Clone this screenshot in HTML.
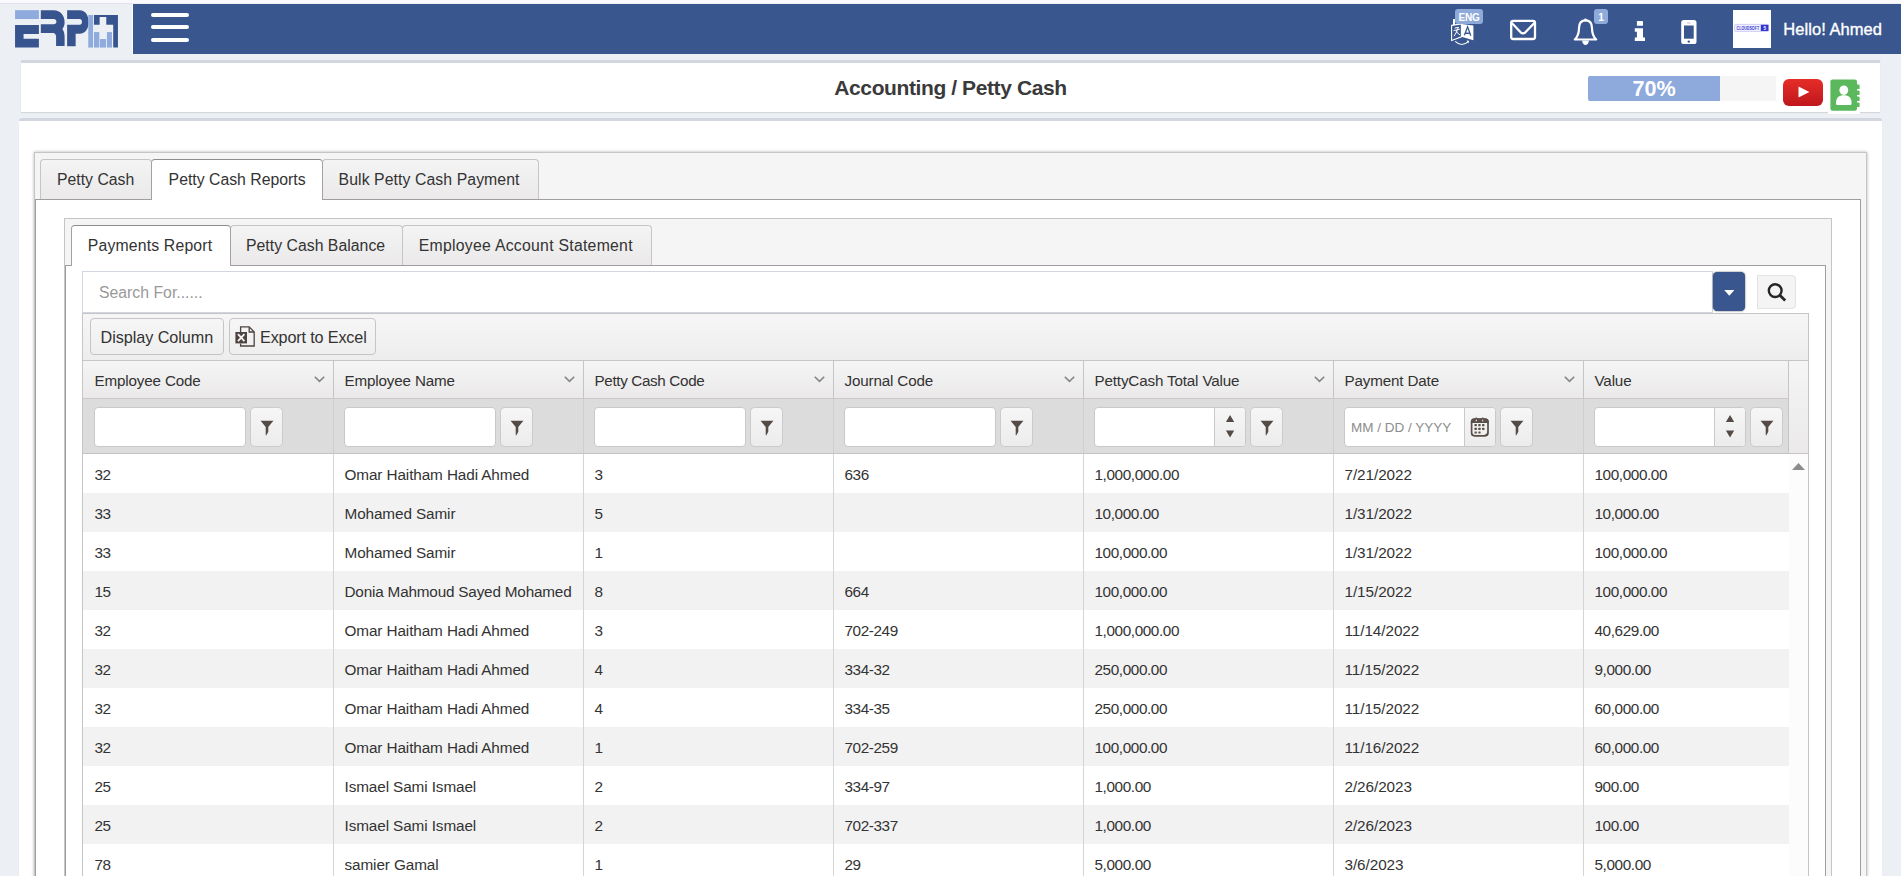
<!DOCTYPE html>
<html>
<head>
<meta charset="utf-8">
<title>Accounting / Petty Cash</title>
<style>
*{box-sizing:border-box;margin:0;padding:0}
html,body{width:1901px;height:876px;overflow:hidden}
body{background:#ecf0f5;font-family:"Liberation Sans",sans-serif;color:#333;position:relative}
.abs{position:absolute}
/* header */
#topstrip{left:0;top:0;width:1901px;height:3px;background:#faf9fe}
#topline{left:0;top:3px;width:132px;height:1px;background:#dfe2ec}
#logosep{left:132px;top:4px;width:1px;height:50px;background:#fbfbfd}
#nav{left:133px;top:4px;width:1768px;height:50px;background:#39568f}
.hb{left:151px;width:38px;height:4.7px;border-radius:2.4px;background:#fff}
#hello{left:1783.3px;top:17px;color:#fff;font-size:16.5px;font-weight:400;-webkit-text-stroke:.35px #fff;letter-spacing:.05px;white-space:nowrap;line-height:24px}
#avatar{left:1733px;top:10px;width:38px;height:38px;background:#fff}
.badge{background:#8eaadb;color:#fff;font-weight:700;font-size:10.5px;line-height:14px;text-align:center;border-radius:3px}
/* boxes */
.box{background:#fff;border-top:3px solid #d2d6de;box-shadow:0 1px 1px rgba(0,0,0,.1)}
#titlebox{left:21px;top:60px;width:1859px;height:52px}
#title{left:0;top:12.6px;width:1859px;text-align:center;font-size:21px;font-weight:700;color:#3a3a3a;line-height:24px;letter-spacing:-.4px}
#mainbox{left:19px;top:118px;width:1863px;height:800px;border-radius:3px}
/* progress */
#prog{left:1588px;top:76px;width:188px;height:25px;background:#f5f5f5;border-radius:2px;overflow:hidden}
#progfill{left:0;top:0;width:132px;height:25px;background:#8ea9db;color:#fff;font-weight:700;font-size:21.6px;line-height:26px;text-align:center}
/* kendo-like */
.ts{background:#f5f5f5;border:1px solid #c5c5c5;box-shadow:0 0 3px rgba(0,0,0,.3)}
.tab{border:1px solid #c5c5c5;border-bottom:none;border-radius:4px 4px 0 0;background:linear-gradient(#f4f4f4,#ebe9e9);font-size:15.8px;line-height:20px;color:#333;white-space:nowrap;text-align:left;padding-top:10px}
.tab.act{background:#fff;border-color:#a2a2a2;border-top-color:#8c8c8c;z-index:3}
.tc{background:#fff;border:1px solid #9e9e9e}

/* grid */
#search{left:82px;top:271px;width:1631px;height:42px;border:1px solid #d2d6de;background:#fff;font-size:15.8px;color:#999;line-height:42px;padding-left:16px}
#ddbtn{left:1713px;top:272.4px;width:32.4px;height:38.8px;background:#39568f;border-radius:4.5px;box-shadow:0 0 1.6px rgba(0,0,0,.85)}
#sbtn{left:1757px;top:275px;width:39px;height:34px;background:#f4f4f4;border:1px solid #e2e2e2;border-radius:0 4px 4px 0}
#grid{left:82px;top:313px;width:1727px;height:600px;border:1px solid #c5c5c5;background:#fff;overflow:hidden}
#tb{left:0;top:0;width:1725px;height:46px;background:linear-gradient(#f6f6f6,#eeeded)}
.kbtn{border:1px solid #c5c5c5;border-radius:4px;background:linear-gradient(#f6f6f6,#efeeee);font-size:16.2px;line-height:20px;color:#333;white-space:nowrap;letter-spacing:-.05px}
#hdr{left:0;top:46px;width:1706px;height:38px;border-top:1px solid #c5c5c5;border-right:1px solid #c5c5c5;background:linear-gradient(#f5f5f5,#ebe9e9)}
#gut{left:1706px;top:46px;width:19px;height:94px;border-top:1px solid #c5c5c5;border-bottom:1px solid #c5c5c5;background:linear-gradient(#f5f5f5,#ebe9e9)}
.th{top:0;height:37px;border-left:1px solid #c5c5c5;font-size:15.2px;line-height:39px;letter-spacing:-.15px;padding-left:10.5px;color:#333;white-space:nowrap}
.chev{top:15px;right:7.6px}
#flt{left:0;top:84px;width:1706px;height:56px;border-top:1px solid #c9c9c9;border-right:1px solid #c5c5c5;border-bottom:1px solid #c5c5c5;background:#dcdcdc}
.fc{top:0;height:54px;border-left:1px solid #cfcfcf}
.fi{left:9.6px;top:8px;width:152px;height:40px;background:#fff;border:1px solid #c9c9c9;border-radius:4px;overflow:hidden}
.fb{left:165.6px;top:8px;width:33px;height:40px;background:linear-gradient(#f6f6f6,#ececec);border:1px solid #cbcbcb;border-radius:4.5px}
.sp{right:0;top:0;width:30.6px;height:38px;background:linear-gradient(#f6f6f6,#ececec);border-left:1px solid #c9c9c9}
.row{left:0;width:1706px;height:39px}
.row.alt{background:#f2f2f2}
.td{top:0;height:39px;border-left:1px solid #d5d5d5;font-size:15.3px;line-height:42px;letter-spacing:-.4px;padding-left:10.5px;color:#333;white-space:nowrap}
#sbar{left:1706px;top:140px;width:19px;height:470px;background:#fcfcfc}
</style>
</head>
<body>
<div class="abs" id="topstrip"></div>
<div class="abs" id="topline"></div>
<div class="abs" id="logosep"></div>
<!-- logo -->
<svg class="abs" style="left:10px;top:4px" width="120" height="50" viewBox="0 0 1901 792">
<rect x="80" y="98" width="378" height="140" fill="#8faadc"/>
<path d="M80 332H458V475H215V552H458V690H80Z" fill="#38548f"/>
<path d="M488 98H690C800 98 865 180 865 290C865 335 852 370 830 395C855 430 865 470 865 520V665H730V520C730 480 710 460 680 460H488V320H690C720 320 735 305 735 280C735 255 720 238 690 238H488Z" fill="#38548f"/>
<path d="M905 98H1100C1200 98 1245 180 1245 285C1245 390 1200 470 1100 470H1040V670H905V330H1100C1130 330 1140 310 1140 285C1140 255 1130 238 1100 238H905Z" fill="#38548f"/>
<rect x="1240" y="175" width="75" height="515" fill="#8faadc"/>
<path d="M1330 175H1710V690H1635V330H1525V205H1420V330H1330Z" fill="#38548f"/>
<rect x="1330" y="445" width="85" height="245" fill="#8faadc"/>
<rect x="1425" y="555" width="95" height="135" fill="#8faadc"/>
<rect x="1535" y="445" width="80" height="245" fill="#8faadc"/>
</svg>
<div class="abs" id="nav"></div>
<div class="abs hb" style="top:12.6px"></div>
<div class="abs hb" style="top:24.6px"></div>
<div class="abs hb" style="top:37.6px"></div>
<!-- language icon -->
<svg class="abs" style="left:1440px;top:4px" width="60" height="50" viewBox="0 0 60 50">
<rect x="13" y="15" width="2" height="6" fill="#fff"/>
<path d="M11.6 21.4L21.4 20V32.8L11.6 36.4Z" fill="none" stroke="#fff" stroke-width="1.1"/>
<path d="M21.4 20L33.4 21.6V36.2L21.4 32.8Z" fill="#fff"/>
<path d="M14.6 24.2L18.6 23.2L16.2 27.4M13.6 26.6L19.8 25.2M17.4 26.6L14 32.2M16 27.6L20 31" fill="none" stroke="#fff" stroke-width="1"/>
<path d="M24.4 31.2L27.6 22.8L30.8 31.8M25.4 29L29.8 29.4" fill="none" stroke="#39568f" stroke-width="1.3"/>
<path d="M15.2 37.4Q21.5 43.4 28.4 37.6" fill="none" stroke="#fff" stroke-width="1.1"/>
<path d="M26.6 36.4L29 36.8L28.4 39.4Z" fill="#fff"/>
</svg>
<div class="abs badge" style="left:1455px;top:9px;width:28px;height:15px;font-size:10px;line-height:18.4px;letter-spacing:-.15px">ENG</div>
<!-- envelope -->
<svg class="abs" style="left:1506px;top:14px" width="34" height="30" viewBox="0 0 34 30">
<rect x="5.2" y="6.9" width="23.8" height="18.1" rx="2" fill="none" stroke="#fff" stroke-width="2.3"/>
<path d="M5.6 8.8L14.6 18.3Q17 20.5 19.4 18.3L28.6 8.8" fill="none" stroke="#fff" stroke-width="2.3" stroke-linejoin="round"/>
</svg>
<!-- bell -->
<svg class="abs" style="left:1570px;top:14px" width="32" height="34" viewBox="0 0 32 34">
<path d="M15.5 6.4C10.3 6.4 9 10.6 9 14.2C9 19.2 7.6 22.8 4.8 25.5H26.2C23.4 22.8 22 19.2 22 14.2C22 10.6 20.7 6.4 15.5 6.4Z" fill="none" stroke="#fff" stroke-width="2.2" stroke-linejoin="round"/>
<circle cx="15.5" cy="6" r="1.4" fill="#fff"/>
<path d="M12.2 26.4H18.8C18.8 29.2 17.3 31 15.5 31C13.7 31 12.2 29.2 12.2 26.4Z" fill="#fff"/>
</svg>
<div class="abs badge" style="left:1594px;top:9px;width:14px;height:15px;font-size:10.2px;line-height:18.4px">1</div>
<!-- info -->
<svg class="abs" style="left:1630px;top:14px" width="20" height="32" viewBox="0 0 20 32">
<rect x="6.9" y="6.9" width="6.1" height="4.9" rx=".6" fill="#fff"/>
<path d="M4.8 14.3H13V23.5H15V27H4.8V23.5H6.9V17.8H4.8Z" fill="#fff"/>
</svg>
<!-- mobile -->
<svg class="abs" style="left:1676px;top:14px" width="26" height="34" viewBox="0 0 26 34">
<rect x="5.2" y="5.9" width="15.3" height="24.2" rx="2.6" fill="#fff"/>
<rect x="8" y="11.5" width="9.7" height="13.2" fill="#39568f"/>
<circle cx="12.8" cy="27.6" r="1.2" fill="#39568f"/>
<rect x="10.8" y="8.6" width="4" height=".9" rx=".4" fill="#39568f" opacity=".35"/>
</svg>

<div class="abs" id="avatar"><svg class="abs" style="left:0;top:0" width="38" height="38" viewBox="0 0 38 38">
<rect x="1.6" y="14.4" width="34" height="7" rx="1" fill="#f1f1fd" stroke="#c4c4f0" stroke-width=".8"/>
<rect x="27.8" y="14.8" width="7.6" height="6.2" fill="#3535d0"/>
<text x="3.6" y="19.7" font-family="Liberation Sans, sans-serif" font-size="4.5" font-weight="700" fill="#3a3ad2" textLength="22.5" lengthAdjust="spacingAndGlyphs">CLOUDSOFT</text>
<text x="30.6" y="19.8" font-family="Liberation Sans, sans-serif" font-size="4.6" font-weight="700" fill="#fff">5</text>
</svg></div>
<div class="abs" id="hello">Hello! Ahmed</div>

<div class="abs box" id="titlebox">
  <div class="abs" id="title">Accounting / Petty Cash</div>
</div>
<div class="abs box" id="mainbox"></div>
<div class="abs" id="prog"><div class="abs" id="progfill">70%</div></div>
<!-- youtube -->
<div class="abs" style="left:1783px;top:79px;width:40px;height:27px;border-radius:6px;background:linear-gradient(#e52d27,#bf171d)"></div>
<svg class="abs" style="left:1783px;top:79px" width="40" height="27" viewBox="0 0 40 27"><path d="M15.5 7.4L26.4 12.9L15.5 18.4Z" fill="#fff"/></svg>
<!-- contact book -->
<div class="abs" style="left:1828px;top:77px;width:32px;height:37px;background:#fff"></div>
<svg class="abs" style="left:1828px;top:77px" width="34" height="37" viewBox="0 0 34 37">
<rect x="2.4" y="2.4" width="26.6" height="31.4" rx="2.2" fill="#5cb85c"/>
<rect x="28" y="7.5" width="3.6" height="4.6" rx="1.2" fill="#5cb85c"/>
<rect x="28" y="13.5" width="3.6" height="4.6" rx="1.2" fill="#5cb85c"/>
<rect x="28" y="19.5" width="3.6" height="4.6" rx="1.2" fill="#5cb85c"/>
<rect x="28" y="25.5" width="3.6" height="4.6" rx="1.2" fill="#5cb85c"/>
<ellipse cx="15.8" cy="13.2" rx="4.4" ry="4.8" fill="#fff"/>
<path d="M8 26.4C8 20.4 11 18.2 15.8 18.2C20.6 18.2 23.6 20.4 23.6 26.4C23.6 27.4 22.8 28 21.8 28H9.8C8.8 28 8 27.4 8 26.4Z" fill="#fff"/>
</svg>


<!-- outer tabstrip -->
<div class="abs ts" style="left:34px;top:152px;width:1833px;height:760px"></div>
<div class="abs tc" style="left:35px;top:199px;width:1826px;height:700px"></div>
<div class="abs tab" style="left:40px;top:159px;width:112px;height:40px;padding-left:16px">Petty Cash</div>
<div class="abs tab act" style="left:151px;top:159px;width:172px;height:41px;padding-left:16.6px">Petty Cash Reports</div>
<div class="abs tab" style="left:322px;top:159px;width:217px;height:40px;padding-left:15.6px;letter-spacing:.08px">Bulk Petty Cash Payment</div>

<!-- inner tabstrip -->
<div class="abs ts" style="left:64px;top:218px;width:1768px;height:700px;box-shadow:none"></div>
<div class="abs tc" style="left:65px;top:265px;width:1761px;height:640px"></div>
<div class="abs tab act" style="left:71px;top:225px;width:160px;height:41px;padding-left:15.8px;letter-spacing:.16px">Payments Report</div>
<div class="abs tab" style="left:230px;top:225px;width:173px;height:40px;padding-left:15px;letter-spacing:.02px">Petty Cash Balance</div>
<div class="abs tab" style="left:402px;top:225px;width:250px;height:40px;padding-left:15.8px;letter-spacing:.26px">Employee Account Statement</div>

<div class="abs" id="search">Search For......</div>
<div class="abs" id="ddbtn"><svg class="abs" style="left:10.8px;top:17.6px" width="11" height="6" viewBox="0 0 11 6"><path d="M.2 .1H10.4L5.3 5.8Z" fill="#fff"/></svg></div>
<div class="abs" id="sbtn"><svg class="abs" style="left:9px;top:6px" width="20" height="20" viewBox="0 0 20 20"><circle cx="8.2" cy="8.6" r="6.4" fill="none" stroke="#262626" stroke-width="2.4"/><path d="M12.6 13L18.2 18.5" stroke="#262626" stroke-width="2.8"/></svg></div>
<div class="abs" id="grid">
<div class="abs" id="tb">
<div class="abs kbtn" style="left:7px;top:4px;width:134px;height:37px;padding:8px 0 0 9.5px">Display Column</div>
<div class="abs kbtn" style="left:146px;top:4px;width:147px;height:37px;padding:8px 0 0 30px;letter-spacing:-.15px">Export to Excel<svg class="abs" style="left:4.5px;top:6.5px" width="21" height="22" viewBox="0 0 21 22"><path d="M5.6 17.4V20H19.2V6L14.2 .9H5.6V6M14.2 .9V6H19.2" fill="none" stroke="#4d4441" stroke-width="1.3"/><rect x=".4" y="6" width="11.6" height="11.4" fill="#4d4441"/><path d="M3 8.2L9.4 15.2M9.4 8.2L3 15.2" stroke="#f4f4f4" stroke-width="1.8"/></svg></div>
</div>
<div class="abs" id="hdr">
<div class="abs th" style="left:0px;width:250px;border-left-color:transparent;">Employee Code<svg class="abs chev" width="11" height="7" viewBox="0 0 11 7"><path d="M.8 .8L5.5 5.4L10.2 .8" fill="none" stroke="#858585" stroke-width="1.6"/></svg></div>
<div class="abs th" style="left:250px;width:250px;">Employee Name<svg class="abs chev" width="11" height="7" viewBox="0 0 11 7"><path d="M.8 .8L5.5 5.4L10.2 .8" fill="none" stroke="#858585" stroke-width="1.6"/></svg></div>
<div class="abs th" style="left:500px;width:250px;letter-spacing:-.33px">Petty Cash Code<svg class="abs chev" width="11" height="7" viewBox="0 0 11 7"><path d="M.8 .8L5.5 5.4L10.2 .8" fill="none" stroke="#858585" stroke-width="1.6"/></svg></div>
<div class="abs th" style="left:750px;width:250px;">Journal Code<svg class="abs chev" width="11" height="7" viewBox="0 0 11 7"><path d="M.8 .8L5.5 5.4L10.2 .8" fill="none" stroke="#858585" stroke-width="1.6"/></svg></div>
<div class="abs th" style="left:1000px;width:250px;">PettyCash Total Value<svg class="abs chev" width="11" height="7" viewBox="0 0 11 7"><path d="M.8 .8L5.5 5.4L10.2 .8" fill="none" stroke="#858585" stroke-width="1.6"/></svg></div>
<div class="abs th" style="left:1250px;width:250px;">Payment Date<svg class="abs chev" width="11" height="7" viewBox="0 0 11 7"><path d="M.8 .8L5.5 5.4L10.2 .8" fill="none" stroke="#858585" stroke-width="1.6"/></svg></div>
<div class="abs th" style="left:1500px;width:206px;">Value</div>
</div>
<div class="abs" id="flt">
<div class="abs fc" style="left:0px;width:250px;border-left-color:transparent;"><div class="abs fi"></div><div class="abs fb"><svg class="abs" style="left:0;top:0" width="31" height="37" viewBox="0 0 31 37"><path d="M9.6 12.7H22.4L17.3 19V23.7L15.2 27.6L14.7 27.1V19Z" fill="#544a46"/></svg></div></div>
<div class="abs fc" style="left:250px;width:250px;"><div class="abs fi"></div><div class="abs fb"><svg class="abs" style="left:0;top:0" width="31" height="37" viewBox="0 0 31 37"><path d="M9.6 12.7H22.4L17.3 19V23.7L15.2 27.6L14.7 27.1V19Z" fill="#544a46"/></svg></div></div>
<div class="abs fc" style="left:500px;width:250px;"><div class="abs fi"></div><div class="abs fb"><svg class="abs" style="left:0;top:0" width="31" height="37" viewBox="0 0 31 37"><path d="M9.6 12.7H22.4L17.3 19V23.7L15.2 27.6L14.7 27.1V19Z" fill="#544a46"/></svg></div></div>
<div class="abs fc" style="left:750px;width:250px;"><div class="abs fi"></div><div class="abs fb"><svg class="abs" style="left:0;top:0" width="31" height="37" viewBox="0 0 31 37"><path d="M9.6 12.7H22.4L17.3 19V23.7L15.2 27.6L14.7 27.1V19Z" fill="#544a46"/></svg></div></div>
<div class="abs fc" style="left:1000px;width:250px;"><div class="abs fi"><div class="abs sp"><svg class="abs" style="left:0;top:0" width="30" height="37" viewBox="0 0 30 37"><path d="M10.9 14L15.05 7L19.2 14ZM10.9 22.6L15.05 29.5L19.2 22.6Z" fill="#544a46"/></svg></div></div><div class="abs fb"><svg class="abs" style="left:0;top:0" width="31" height="37" viewBox="0 0 31 37"><path d="M9.6 12.7H22.4L17.3 19V23.7L15.2 27.6L14.7 27.1V19Z" fill="#544a46"/></svg></div></div>
<div class="abs fc" style="left:1250px;width:250px;"><div class="abs fi"><div class="abs" style="left:6.4px;top:0;font-size:13.5px;line-height:40px;color:#8c8c8c;white-space:nowrap">MM / DD / YYYY</div><div class="abs sp"><svg class="abs" style="left:-.8px;top:.6px" width="30" height="37" viewBox="0 0 30 37"><rect x="7.6" y="10.2" width="16.4" height="16.6" rx="3" fill="none" stroke="#5a4f4b" stroke-width="1.7"/><path d="M6.8 14V13Q6.8 9.4 10.4 9.4H21.2Q24.8 9.4 24.8 13V14Z" fill="#5a4f4b"/><rect x="11.3" y="8.6" width="2" height="4.2" rx=".8" fill="#5a4f4b"/><rect x="17.7" y="8.6" width="2" height="4.2" rx=".8" fill="#5a4f4b"/><rect x="11.7" y="10.6" width="1.2" height="1.8" fill="#d9d5d4"/><rect x="18.1" y="10.6" width="1.2" height="1.8" fill="#d9d5d4"/><g fill="#5a4f4b"><rect x="10.5" y="15" width="2.3" height="2.2" rx=".5"/><rect x="14.3" y="15" width="2.3" height="2.2" rx=".5"/><rect x="18.1" y="15" width="2.3" height="2.2" rx=".5"/><rect x="10.5" y="18.7" width="2.3" height="2.2" rx=".5"/><rect x="14.3" y="18.7" width="2.3" height="2.2" rx=".5"/><rect x="18.1" y="18.7" width="2.3" height="2.2" rx=".5"/><rect x="10.5" y="22.4" width="2.3" height="2.2" rx=".5"/><rect x="14.3" y="22.4" width="2.3" height="2.2" rx=".5"/></g><path d="M19 26.4Q23.4 25.6 24 21.6V24.6Q23.6 26.6 21.4 26.8Z" fill="#5a4f4b"/></svg></div></div><div class="abs fb"><svg class="abs" style="left:0;top:0" width="31" height="37" viewBox="0 0 31 37"><path d="M9.6 12.7H22.4L17.3 19V23.7L15.2 27.6L14.7 27.1V19Z" fill="#544a46"/></svg></div></div>
<div class="abs fc" style="left:1500px;width:206px;"><div class="abs fi"><div class="abs sp"><svg class="abs" style="left:0;top:0" width="30" height="37" viewBox="0 0 30 37"><path d="M10.9 14L15.05 7L19.2 14ZM10.9 22.6L15.05 29.5L19.2 22.6Z" fill="#544a46"/></svg></div></div><div class="abs fb"><svg class="abs" style="left:0;top:0" width="31" height="37" viewBox="0 0 31 37"><path d="M9.6 12.7H22.4L17.3 19V23.7L15.2 27.6L14.7 27.1V19Z" fill="#544a46"/></svg></div></div>
</div>
<div class="abs" id="gut"></div>
<div class="abs row" style="top:140px">
<div class="abs td" style="left:0px;width:250px;border-left-color:transparent;">32</div>
<div class="abs td" style="left:250px;width:250px;letter-spacing:-.1px">Omar Haitham Hadi Ahmed</div>
<div class="abs td" style="left:500px;width:250px;">3</div>
<div class="abs td" style="left:750px;width:250px;">636</div>
<div class="abs td" style="left:1000px;width:250px;">1,000,000.00</div>
<div class="abs td" style="left:1250px;width:250px;letter-spacing:-.07px">7/21/2022</div>
<div class="abs td" style="left:1500px;width:206px;">100,000.00</div>
</div>
<div class="abs row alt" style="top:179px">
<div class="abs td" style="left:0px;width:250px;border-left-color:transparent;">33</div>
<div class="abs td" style="left:250px;width:250px;letter-spacing:-.1px">Mohamed Samir</div>
<div class="abs td" style="left:500px;width:250px;">5</div>
<div class="abs td" style="left:750px;width:250px;"></div>
<div class="abs td" style="left:1000px;width:250px;">10,000.00</div>
<div class="abs td" style="left:1250px;width:250px;letter-spacing:-.07px">1/31/2022</div>
<div class="abs td" style="left:1500px;width:206px;">10,000.00</div>
</div>
<div class="abs row" style="top:218px">
<div class="abs td" style="left:0px;width:250px;border-left-color:transparent;">33</div>
<div class="abs td" style="left:250px;width:250px;letter-spacing:-.1px">Mohamed Samir</div>
<div class="abs td" style="left:500px;width:250px;">1</div>
<div class="abs td" style="left:750px;width:250px;"></div>
<div class="abs td" style="left:1000px;width:250px;">100,000.00</div>
<div class="abs td" style="left:1250px;width:250px;letter-spacing:-.07px">1/31/2022</div>
<div class="abs td" style="left:1500px;width:206px;">100,000.00</div>
</div>
<div class="abs row alt" style="top:257px">
<div class="abs td" style="left:0px;width:250px;border-left-color:transparent;">15</div>
<div class="abs td" style="left:250px;width:250px;letter-spacing:-.19px">Donia Mahmoud Sayed Mohamed</div>
<div class="abs td" style="left:500px;width:250px;">8</div>
<div class="abs td" style="left:750px;width:250px;">664</div>
<div class="abs td" style="left:1000px;width:250px;">100,000.00</div>
<div class="abs td" style="left:1250px;width:250px;letter-spacing:-.07px">1/15/2022</div>
<div class="abs td" style="left:1500px;width:206px;">100,000.00</div>
</div>
<div class="abs row" style="top:296px">
<div class="abs td" style="left:0px;width:250px;border-left-color:transparent;">32</div>
<div class="abs td" style="left:250px;width:250px;letter-spacing:-.1px">Omar Haitham Hadi Ahmed</div>
<div class="abs td" style="left:500px;width:250px;">3</div>
<div class="abs td" style="left:750px;width:250px;">702-249</div>
<div class="abs td" style="left:1000px;width:250px;">1,000,000.00</div>
<div class="abs td" style="left:1250px;width:250px;letter-spacing:-.07px">11/14/2022</div>
<div class="abs td" style="left:1500px;width:206px;">40,629.00</div>
</div>
<div class="abs row alt" style="top:335px">
<div class="abs td" style="left:0px;width:250px;border-left-color:transparent;">32</div>
<div class="abs td" style="left:250px;width:250px;letter-spacing:-.1px">Omar Haitham Hadi Ahmed</div>
<div class="abs td" style="left:500px;width:250px;">4</div>
<div class="abs td" style="left:750px;width:250px;">334-32</div>
<div class="abs td" style="left:1000px;width:250px;">250,000.00</div>
<div class="abs td" style="left:1250px;width:250px;letter-spacing:-.07px">11/15/2022</div>
<div class="abs td" style="left:1500px;width:206px;">9,000.00</div>
</div>
<div class="abs row" style="top:374px">
<div class="abs td" style="left:0px;width:250px;border-left-color:transparent;">32</div>
<div class="abs td" style="left:250px;width:250px;letter-spacing:-.1px">Omar Haitham Hadi Ahmed</div>
<div class="abs td" style="left:500px;width:250px;">4</div>
<div class="abs td" style="left:750px;width:250px;">334-35</div>
<div class="abs td" style="left:1000px;width:250px;">250,000.00</div>
<div class="abs td" style="left:1250px;width:250px;letter-spacing:-.07px">11/15/2022</div>
<div class="abs td" style="left:1500px;width:206px;">60,000.00</div>
</div>
<div class="abs row alt" style="top:413px">
<div class="abs td" style="left:0px;width:250px;border-left-color:transparent;">32</div>
<div class="abs td" style="left:250px;width:250px;letter-spacing:-.1px">Omar Haitham Hadi Ahmed</div>
<div class="abs td" style="left:500px;width:250px;">1</div>
<div class="abs td" style="left:750px;width:250px;">702-259</div>
<div class="abs td" style="left:1000px;width:250px;">100,000.00</div>
<div class="abs td" style="left:1250px;width:250px;letter-spacing:-.07px">11/16/2022</div>
<div class="abs td" style="left:1500px;width:206px;">60,000.00</div>
</div>
<div class="abs row" style="top:452px">
<div class="abs td" style="left:0px;width:250px;border-left-color:transparent;">25</div>
<div class="abs td" style="left:250px;width:250px;letter-spacing:-.1px">Ismael Sami Ismael</div>
<div class="abs td" style="left:500px;width:250px;">2</div>
<div class="abs td" style="left:750px;width:250px;">334-97</div>
<div class="abs td" style="left:1000px;width:250px;">1,000.00</div>
<div class="abs td" style="left:1250px;width:250px;letter-spacing:-.07px">2/26/2023</div>
<div class="abs td" style="left:1500px;width:206px;">900.00</div>
</div>
<div class="abs row alt" style="top:491px">
<div class="abs td" style="left:0px;width:250px;border-left-color:transparent;">25</div>
<div class="abs td" style="left:250px;width:250px;letter-spacing:-.1px">Ismael Sami Ismael</div>
<div class="abs td" style="left:500px;width:250px;">2</div>
<div class="abs td" style="left:750px;width:250px;">702-337</div>
<div class="abs td" style="left:1000px;width:250px;">1,000.00</div>
<div class="abs td" style="left:1250px;width:250px;letter-spacing:-.07px">2/26/2023</div>
<div class="abs td" style="left:1500px;width:206px;">100.00</div>
</div>
<div class="abs row" style="top:530px">
<div class="abs td" style="left:0px;width:250px;border-left-color:transparent;">78</div>
<div class="abs td" style="left:250px;width:250px;letter-spacing:-.1px">samier Gamal</div>
<div class="abs td" style="left:500px;width:250px;">1</div>
<div class="abs td" style="left:750px;width:250px;">29</div>
<div class="abs td" style="left:1000px;width:250px;">5,000.00</div>
<div class="abs td" style="left:1250px;width:250px;letter-spacing:-.07px">3/6/2023</div>
<div class="abs td" style="left:1500px;width:206px;">5,000.00</div>
</div>
<div class="abs" id="sbar"><svg class="abs" style="left:3px;top:9px" width="13" height="7" viewBox="0 0 13 7"><path d="M0 7L6.5 0L13 7Z" fill="#8b8b8b"/></svg></div>
</div>
</body>
</html>
